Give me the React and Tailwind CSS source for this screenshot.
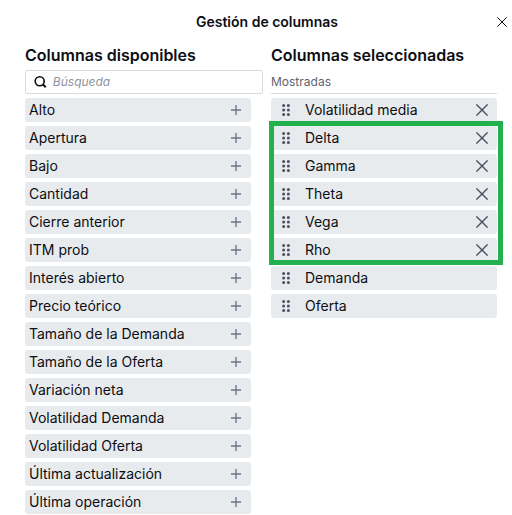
const available = [
  'Alto',
  'Apertura',
  'Bajo',
  'Cantidad',
  'Cierre anterior',
  'ITM prob',
  'Interés abierto',
  'Precio teórico',
  'Tamaño de la Demanda',
  'Tamaño de la Oferta',
  'Variación neta',
  'Volatilidad Demanda',
  'Volatilidad Oferta',
  'Última actualización',
  'Última operación',
]

const groups = [
  { id: 'precio', items: ['Volatilidad media'], removable: true },
  { id: 'griegas', items: ['Delta', 'Gamma', 'Theta', 'Vega', 'Rho'], removable: true, highlighted: true },
  { id: 'fijas', items: ['Demanda', 'Oferta'] },
]

function CrossIcon({ size, strokeWidth }) {
  return (
    <svg width={size} height={size} viewBox="0 0 12 12" fill="none" stroke="currentColor" strokeWidth={strokeWidth} aria-hidden="true">
      <path d="M0.4 0.4 11.6 11.6M11.6 0.4 0.4 11.6" />
    </svg>
  )
}

function PlusIcon() {
  return (
    <svg width="10" height="10" viewBox="0 0 10 10" fill="none" stroke="currentColor" strokeWidth="1.4" aria-hidden="true">
      <path d="M5 0v10M0 5h10" />
    </svg>
  )
}

function SearchIcon() {
  return (
    <svg width="14" height="14" viewBox="0 0 14 14" fill="none" stroke="currentColor" strokeWidth="1.8" aria-hidden="true">
      <circle cx="6.2" cy="6.2" r="4.9" />
      <path d="m9.6 9.6 3.2 3.2" strokeWidth="2.2" />
    </svg>
  )
}

function DragHandle() {
  return (
    <svg width="10" height="14" viewBox="0 0 10 14" fill="#4a5163" aria-hidden="true">
      {[2.4, 7, 11.6].map(y => (
        <g key={y}>
          <circle cx="2.6" cy={y} r="1.5" />
          <circle cx="7.4" cy={y} r="1.5" />
        </g>
      ))}
    </svg>
  )
}

function AvailableItem({ name }) {
  return (
    <li className="flex h-6 items-center justify-between rounded-[3px] bg-[#e8ebee] pl-1 pr-2.5">
      {name}
      <button type="button" aria-label={`Añadir ${name}`} className="text-[#6f7885]">
        <PlusIcon />
      </button>
    </li>
  )
}

function SelectedItem({ name, removable }) {
  return (
    <li className="flex h-6 items-center rounded-[3px] bg-[#e8ebee] pl-2.5 pr-2">
      <DragHandle />
      <span className="ml-3.5 flex-1">{name}</span>
      {removable && (
        <button type="button" aria-label={`Quitar ${name}`} className="px-px text-[#434a5c]">
          <CrossIcon size={12} strokeWidth={1.3} />
        </button>
      )}
    </li>
  )
}

export default function App() {
  return (
    <div className="bg-white font-['Inter',sans-serif] text-sm text-[#0c0e14]">
      <header className="flex items-center pb-2 pl-[27px] pr-[5px] pt-3">
        <h1 className="flex-1 pl-2.5 text-center text-sm font-semibold leading-5">Gestión de columnas</h1>
        <button type="button" aria-label="Cerrar">
          <CrossIcon size={10} strokeWidth={1.2} />
        </button>
      </header>

      <main className="grid grid-cols-2 gap-2 pl-[25px] pr-[3px]">
        <section>
          <h2 className="text-base font-semibold leading-[30px]">Columnas disponibles</h2>
          <label className="mb-1 flex h-6 items-center gap-1.5 rounded-[2px] border border-[#d9dbe0] pl-2">
            <SearchIcon />
            <input
              type="text"
              aria-label="Búsqueda"
              placeholder="Búsqueda"
              className="w-full min-w-0 text-xs italic outline-none placeholder:text-[#8f949e]"
            />
          </label>
          <ul className="mr-3 space-y-1">
            {available.map(name => (
              <AvailableItem key={name} name={name} />
            ))}
          </ul>
        </section>

        <section>
          <h2 className="text-base font-semibold leading-[30px]">Columnas seleccionadas</h2>
          <h3 className="mb-1 mr-3 h-6 border-b border-[#d9dbe0] text-xs leading-6 text-[#5d6472]">Mostradas</h3>
          <div className="mr-3 flex flex-col gap-1">
            {groups.map(group => (
              <div key={group.id} className="relative">
                <ul className="space-y-1">
                  {group.items.map(name => (
                    <SelectedItem key={name} name={name} removable={group.removable} />
                  ))}
                </ul>
                {group.highlighted && (
                  <div className="pointer-events-none absolute -bottom-[3px] -left-0.5 -right-1.5 -top-[5px] border-5 border-[#22b14c]" />
                )}
              </div>
            ))}
          </div>
        </section>
      </main>
    </div>
  )
}
